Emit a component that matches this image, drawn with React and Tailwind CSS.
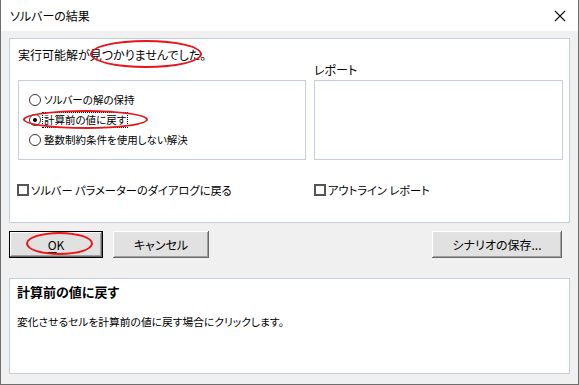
import React from 'react';

const jp = "font-['Noto_Sans_CJK_JP','Noto_Sans',sans-serif] [font-feature-settings:'palt']";

const btn =
  'h-[27px] bg-[#e1e1e1] text-[12px] font-normal text-black flex items-center justify-center shadow-[inset_-1px_-1px_#696969,inset_1px_1px_#ffffff,inset_-2px_-2px_#a0a0a0,inset_2px_2px_#e3e3e3]';

const Radio = ({ checked, label, focus }) => (
  <div className="flex items-center h-[20px]">
    <span className="w-[12px] h-[12px] rounded-full border-[1.5px] border-[#333] bg-white flex items-center justify-center">
      {checked && <span className="w-[4px] h-[4px] rounded-full bg-black" />}
    </span>
    <span
      className={
        'ml-[2px] px-[1px] text-[10.5px] leading-[14px] text-black ' +
        (focus ? 'outline outline-1 outline-dotted outline-black' : '')
      }
    >
      {label}
    </span>
  </div>
);

const Check = ({ label }) => (
  <div className="flex items-center">
    <span className="w-[12px] h-[12px] border-2 border-[#555] bg-white" />
    <span className="ml-[2px] text-[11.25px] leading-[14px] text-black">{label}</span>
  </div>
);

const Ellipse = ({ className }) => (
  <div className={'absolute rounded-[50%] border-2 border-[#e8161b] pointer-events-none ' + className} />
);

export default function App() {
  return (
    <div className={`relative w-[579px] h-[385px] flex flex-col bg-[#f0f0f0] border-x border-b border-[#6e6e6e] ${jp}`}>
      {/* title bar */}
      <div className="h-[31px] bg-white flex items-center justify-between pl-[9px] pr-[10px]">
        <span className="text-[12px] text-black">ソルバーの結果</span>
        <svg width="12" height="12" viewBox="0 0 12 12" className="mr-[2px]">
          <path d="M1 1L11 11M11 1L1 11" stroke="#111" strokeWidth="1.1" />
        </svg>
      </div>

      {/* main panel */}
      <div className="mx-[8px] mt-[7px] h-[185px] border border-[#c3d0dc] bg-white flex flex-col pl-[8px] pr-[5px]">
        <div className="mt-[8px] h-[16px] leading-[16px] text-[12px] text-black">
          実行可能解が見つかりませんでした。
        </div>
        <div className="flex items-end gap-[8px]">
          <div className="w-[288px] h-[80px] border border-[#c3d0dc] pl-[10px] pt-[9px] flex flex-col">
            <Radio label="ソルバーの解の保持" />
            <Radio label="計算前の値に戻す" checked focus />
            <Radio label="整数制約条件を使用しない解決" />
          </div>
          <div className="flex flex-col">
            <span className="text-[12px] leading-[14px] text-black mb-[3px]">レポート</span>
            <div className="w-[249px] h-[80px] border border-[#c3d0dc]" />
          </div>
        </div>
        <div className="mt-[23px] flex">
          <div className="w-[297px] -ml-[1px]">
            <Check label="ソルバー パラメーターのダイアログに戻る" />
          </div>
          <Check label="アウトライン レポート" />
        </div>
      </div>

      {/* buttons */}
      <div className="mt-[8px] flex pl-[8px] pr-[16px]">
        <button className={btn + ' w-[94px] border border-black'}>
          <span className="underline underline-offset-2">O</span>K
        </button>
        <button className={btn + ' w-[96px] ml-[10px]'}>キャンセル</button>
        <button className={btn + ' w-[130px] ml-auto'}>シナリオの保存...</button>
      </div>

      {/* description */}
      <div className="mx-[8px] mt-[20px] h-[96px] border border-[#c3d0dc] bg-white px-[7px] pt-[5px]">
        <div className="text-[13px] leading-[16px] font-bold text-black">計算前の値に戻す</div>
        <div className="mt-[14px] text-[10.75px] leading-[16px] text-black">
          変化させるセルを計算前の値に戻す場合にクリックします。
        </div>
      </div>

      <Ellipse className="left-[89px] top-[40px] w-[112px] h-[28px]" />
      <Ellipse className="left-[22px] top-[110px] w-[125px] h-[19px]" />
      <Ellipse className="left-[25px] top-[232px] w-[67px] h-[23px]" />
    </div>
  );
}
